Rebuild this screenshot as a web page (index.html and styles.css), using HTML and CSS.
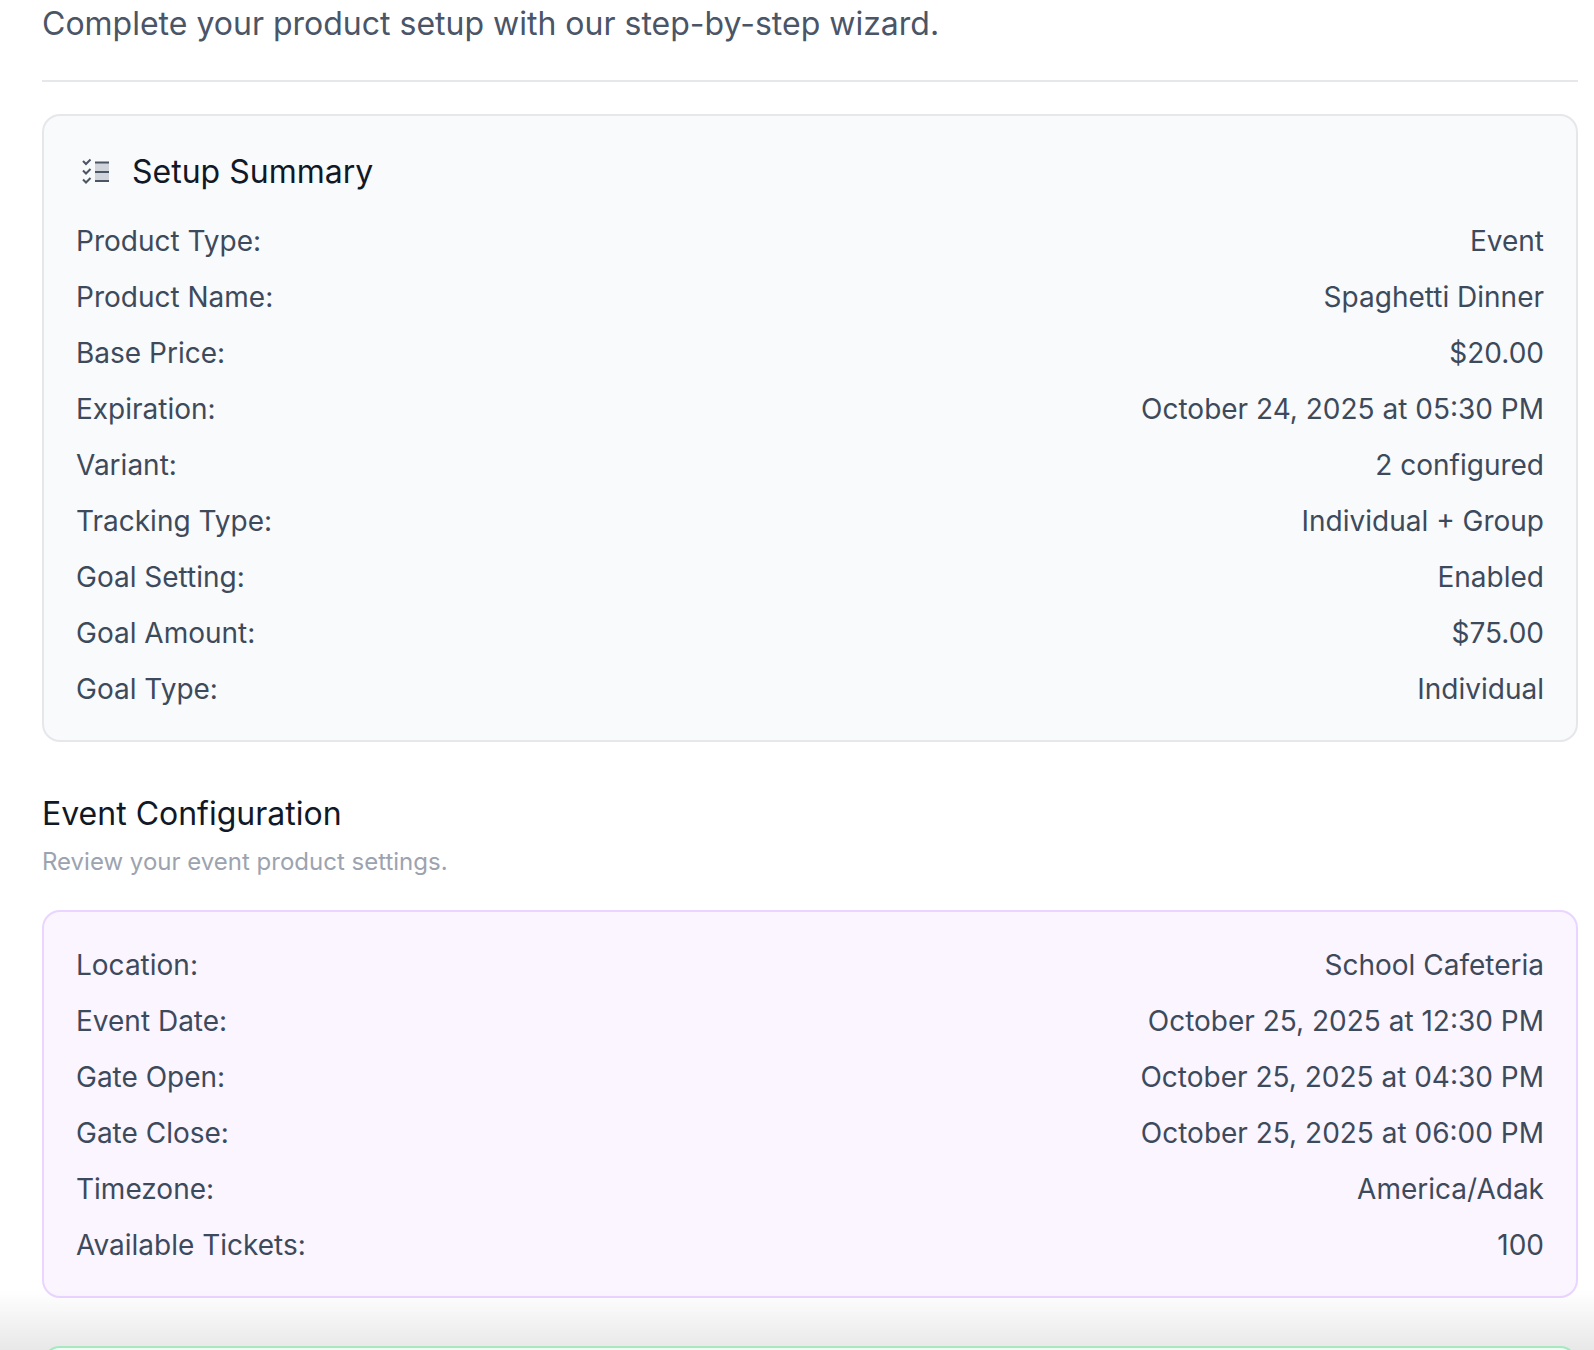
FILE: index.html
```html
<!DOCTYPE html>
<html lang="en">
<head>
<meta charset="utf-8">
<title>Product Setup</title>
<link rel="stylesheet" href="styles.css">
</head>
<body>
<main class="page">
  <header class="intro">
    <p class="intro-text">Complete your product setup with our step-by-step wizard.</p>
  </header>
  <section class="card card-gray">
    <h2 class="card-title">
      <svg class="title-icon" viewBox="0 0 30 30" fill="none" aria-hidden="true">
        <rect x="15" y="5.500" width="14" height="18.500" fill="#d1d5db"/>
        <path d="M15 5.500h14M15 15h14M15 24h14" stroke="#4b5563" stroke-width="2"/>
        <path d="M3 4l3 3 4.500-4.500M3 13.500l3 3 4.500-4.500M3 22.500l3 3 4.500-4.500" stroke="#4b5563" stroke-width="2"/>
      </svg>
      Setup Summary
    </h2>
    <dl class="rows">
      <div class="row"><dt>Product Type:</dt><dd>Event</dd></div>
      <div class="row"><dt>Product Name:</dt><dd>Spaghetti Dinner</dd></div>
      <div class="row"><dt>Base Price:</dt><dd>$20.00</dd></div>
      <div class="row"><dt>Expiration:</dt><dd>October 24, 2025 at 05:30 PM</dd></div>
      <div class="row"><dt>Variant:</dt><dd>2 configured</dd></div>
      <div class="row"><dt>Tracking Type:</dt><dd>Individual + Group</dd></div>
      <div class="row"><dt>Goal Setting:</dt><dd>Enabled</dd></div>
      <div class="row"><dt>Goal Amount:</dt><dd>$75.00</dd></div>
      <div class="row"><dt>Goal Type:</dt><dd>Individual</dd></div>
    </dl>
  </section>
  <section class="config">
    <h2 class="config-title">Event Configuration</h2>
    <p class="config-sub">Review your event product settings.</p>
  </section>
  <section class="card card-purple">
    <dl class="rows">
      <div class="row"><dt>Location:</dt><dd>School Cafeteria</dd></div>
      <div class="row"><dt>Event Date:</dt><dd>October 25, 2025 at 12:30 PM</dd></div>
      <div class="row"><dt>Gate Open:</dt><dd>October 25, 2025 at 04:30 PM</dd></div>
      <div class="row"><dt>Gate Close:</dt><dd>October 25, 2025 at 06:00 PM</dd></div>
      <div class="row"><dt>Timezone:</dt><dd>America/Adak</dd></div>
      <div class="row"><dt>Available Tickets:</dt><dd>100</dd></div>
    </dl>
  </section>
  <section class="card card-green"></section>
</main>
<div class="fade"></div>
</body>
</html>
```

FILE: styles.css
```css
* { box-sizing: border-box; }
html, body { margin: 0; height: 1350px; overflow: hidden; background: #fff; }
body { font-family: Inter, "Liberation Sans", sans-serif; color: #374151; }
.page { padding: 0 16px 0 42px; }
.intro { height: 82px; padding-top: 6px; border-bottom: 2px solid #e5e7eb; }
.intro-text { margin: 0; font-size: 32px; line-height: 36px; color: #4a5568; }
.card { border: 2px solid #e5e7eb; border-radius: 18px; padding: 32px; }
.card-gray { margin-top: 32px; height: 628px; background: #f9fafb; }
.card-purple { height: 388px; padding-top: 24px; background: #faf5ff; border-color: #e9d5ff; }
.card-green { position: relative; z-index: 1; margin-top: 48px; height: 200px; background: #f0fdf4; border-color: #a7e8c0; }
.card-title { display: flex; align-items: center; gap: 22px; margin: 0 0 16px; font-size: 32px; font-weight: 400; line-height: 48px; color: #111827; height: 48px; }
.title-icon { width: 30px; height: 30px; flex: none; margin-left: 4px; }
.rows { margin: 0; }
.row { display: flex; justify-content: space-between; align-items: center; height: 56px; padding-top: 1px; font-size: 28px; color: #3d4a5c; }
.row dt, .row dd { margin: 0; }
.config { padding-top: 54px; height: 168px; }
.config-title { margin: 0; font-size: 32px; font-weight: 400; line-height: 36px; color: #111827; }
.config-sub { margin: 16px 0 0; font-size: 24px; line-height: 28px; color: #9ca3af; }
.fade { position: fixed; left: 0; right: 0; bottom: 0; height: 60px; background: linear-gradient(to bottom, rgba(0,0,0,0), rgba(0,0,0,0.09)); pointer-events: none; }
```
